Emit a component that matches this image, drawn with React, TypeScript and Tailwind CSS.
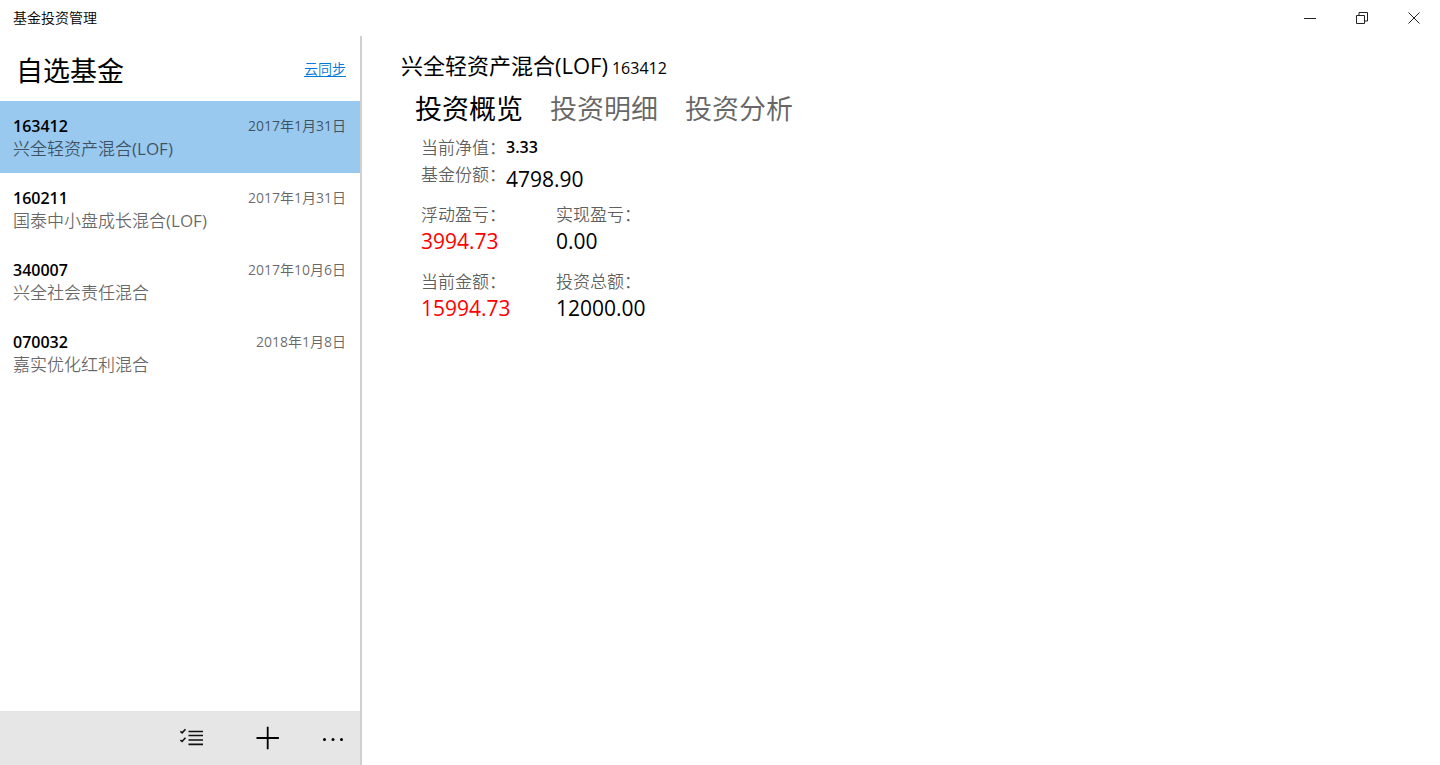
import { useState } from "react";

type Fund = { code: string; name: string; date: string };

const funds: Fund[] = [
  { code: "163412", name: "兴全轻资产混合(LOF)", date: "2017年1月31日" },
  { code: "160211", name: "国泰中小盘成长混合(LOF)", date: "2017年1月31日" },
  { code: "340007", name: "兴全社会责任混合", date: "2017年10月6日" },
  { code: "070032", name: "嘉实优化红利混合", date: "2018年1月8日" },
];

const tabs = ["投资概览", "投资明细", "投资分析"];

const figures = [
  { label: "浮动盈亏：", value: "3994.73", gain: true },
  { label: "实现盈亏：", value: "0.00", gain: false },
  { label: "当前金额：", value: "15994.73", gain: true },
  { label: "投资总额：", value: "12000.00", gain: false },
];

function TitleBar() {
  return (
    <header className="flex h-9 items-center justify-between pl-[13px]">
      <span className="text-[14px] leading-5 font-[350]">基金投资管理</span>
      <div className="flex h-full">
        <button type="button" aria-label="最小化" className="flex w-[52px] items-center justify-center">
          <svg width="12" height="12" viewBox="0 0 12 12" stroke="#222" fill="none">
            <path d="M0 6.5h12" />
          </svg>
        </button>
        <button type="button" aria-label="还原" className="flex w-[52px] items-center justify-center">
          <svg width="12" height="12" viewBox="0 0 12 12" stroke="#222" fill="none">
            <path d="M.5 3.5h8v8h-8zM3 3.5v-3h8.500v8.500h-3" />
          </svg>
        </button>
        <button type="button" aria-label="关闭" className="flex w-[52px] items-center justify-center">
          <svg width="12" height="12" viewBox="0 0 12 12" stroke="#222" fill="none">
            <path d="M.5.5l11 11M11.500.5l-11 11" />
          </svg>
        </button>
      </div>
    </header>
  );
}

function CommandBar() {
  return (
    <footer className="flex h-[54px] items-stretch justify-end bg-[#e6e6e6]">
      <button type="button" aria-label="多选" className="flex w-[76px] items-center justify-center">
        <svg width="24" height="20" viewBox="0 0 24 20" fill="none" stroke="#111">
          <path d="M8.500 3.500h14.500M8.500 7.500h14.500M8.500 12h14.500M8.500 16.300h14.500" strokeWidth="1.700" />
          <path d="M.4 3.400l1.700 1.500L5.500 1.200M.4 12l1.700 1.500 3.400-3.700" strokeWidth="1.600" />
        </svg>
      </button>
      <button type="button" aria-label="添加" className="flex w-[76px] items-center justify-center">
        <svg width="24" height="24" viewBox="0 0 24 24" fill="none" stroke="#000" strokeWidth="1.800">
          <path d="M11.700 .8v22.400M.5 12h22.400" />
        </svg>
      </button>
      <button type="button" aria-label="更多" className="flex w-[54px] items-center justify-center">
        <svg width="22" height="6" viewBox="0 0 22 6" fill="#000">
          <circle cx="2.500" cy="4.500" r="1.500" />
          <circle cx="11" cy="4.500" r="1.500" />
          <circle cx="19.500" cy="4.500" r="1.500" />
        </svg>
      </button>
    </footer>
  );
}

export default function App() {
  const [selected, setSelected] = useState(0);
  const [tab, setTab] = useState(0);
  const fund = funds[selected];

  return (
    <div className="flex min-h-screen flex-col bg-white font-['Open_Sans','Noto_Sans_CJK_SC',sans-serif] text-black" lang="zh-CN">
      <TitleBar />
      <div className="flex flex-1">
        <aside className="flex w-[362px] shrink-0 flex-col border-r-2 border-[#d0d0d0]">
          <div className="flex h-[65px] items-center justify-between pr-[14px] pl-4">
            <h1 className="pt-1 text-[27px] leading-9">自选基金</h1>
            <a href="#sync" className="text-[14px] leading-5 font-[350] text-[#0078d7] underline underline-offset-2">
              云同步
            </a>
          </div>
          <ul className="flex-1">
            {funds.map((f, i) => (
              <li key={f.code}>
                <button
                  type="button"
                  onClick={() => setSelected(i)}
                  className={
                    i === selected
                      ? "flex h-[72px] w-full flex-col justify-center bg-[#99c9ef] pt-[2px] pr-[14px] pl-[13px] text-left"
                      : "flex h-[72px] w-full flex-col justify-center pt-[2px] pr-[14px] pl-[13px] text-left"
                  }
                >
                  <span className="flex w-full items-center justify-between leading-[22px]">
                    <span className="text-[16px] font-semibold">{f.code}</span>
                    <span className="text-[14px] text-black/60">{f.date}</span>
                  </span>
                  <span className="font-['Open_Sans','Noto_Sans_CJK_SC_DemiLight','Noto_Sans_CJK_SC',sans-serif] text-[17px] leading-6 text-black/60">
                    {f.name}
                  </span>
                </button>
              </li>
            ))}
          </ul>
          <CommandBar />
        </aside>
        <main className="flex-1 pt-[13px] pl-[39px]">
          <h2 className="flex items-baseline gap-1 leading-8">
            <span className="text-[22px]">{fund.name}</span>
            <span className="text-[16px]">{fund.code}</span>
          </h2>
          <div role="tablist" className="mt-[7px] flex gap-[27px] pl-[14px]">
            {tabs.map((t, i) => (
              <button
                key={t}
                type="button"
                role="tab"
                aria-selected={i === tab}
                onClick={() => setTab(i)}
                className={i === tab ? "text-[27px] leading-9" : "text-[27px] leading-9 text-black/60"}
              >
                {t}
              </button>
            ))}
          </div>
          <section className="mt-[7px] pl-5">
            <dl className="grid grid-cols-[85px_1fr]">
              <dt className="text-[17px] leading-[27px] font-[350] text-black/65">当前净值：</dt>
              <dd className="text-[16px] leading-[27px] font-semibold">3.33</dd>
              <dt className="text-[17px] leading-[27px] font-[350] text-black/65">基金份额：</dt>
              <dd className="text-[21px] leading-9">4798.90</dd>
            </dl>
            <dl className="mt-[5px] grid grid-cols-[repeat(2,135px)] gap-y-[14px]">
              {figures.map((f) => (
                <div key={f.label}>
                  <dt className="text-[17px] leading-[26px] font-[350] text-black/65">{f.label}</dt>
                  <dd className={f.gain ? "text-[21px] leading-[27px] text-[#ff0000]" : "text-[21px] leading-[27px]"}>
                    {f.value}
                  </dd>
                </div>
              ))}
            </dl>
          </section>
        </main>
      </div>
    </div>
  );
}
